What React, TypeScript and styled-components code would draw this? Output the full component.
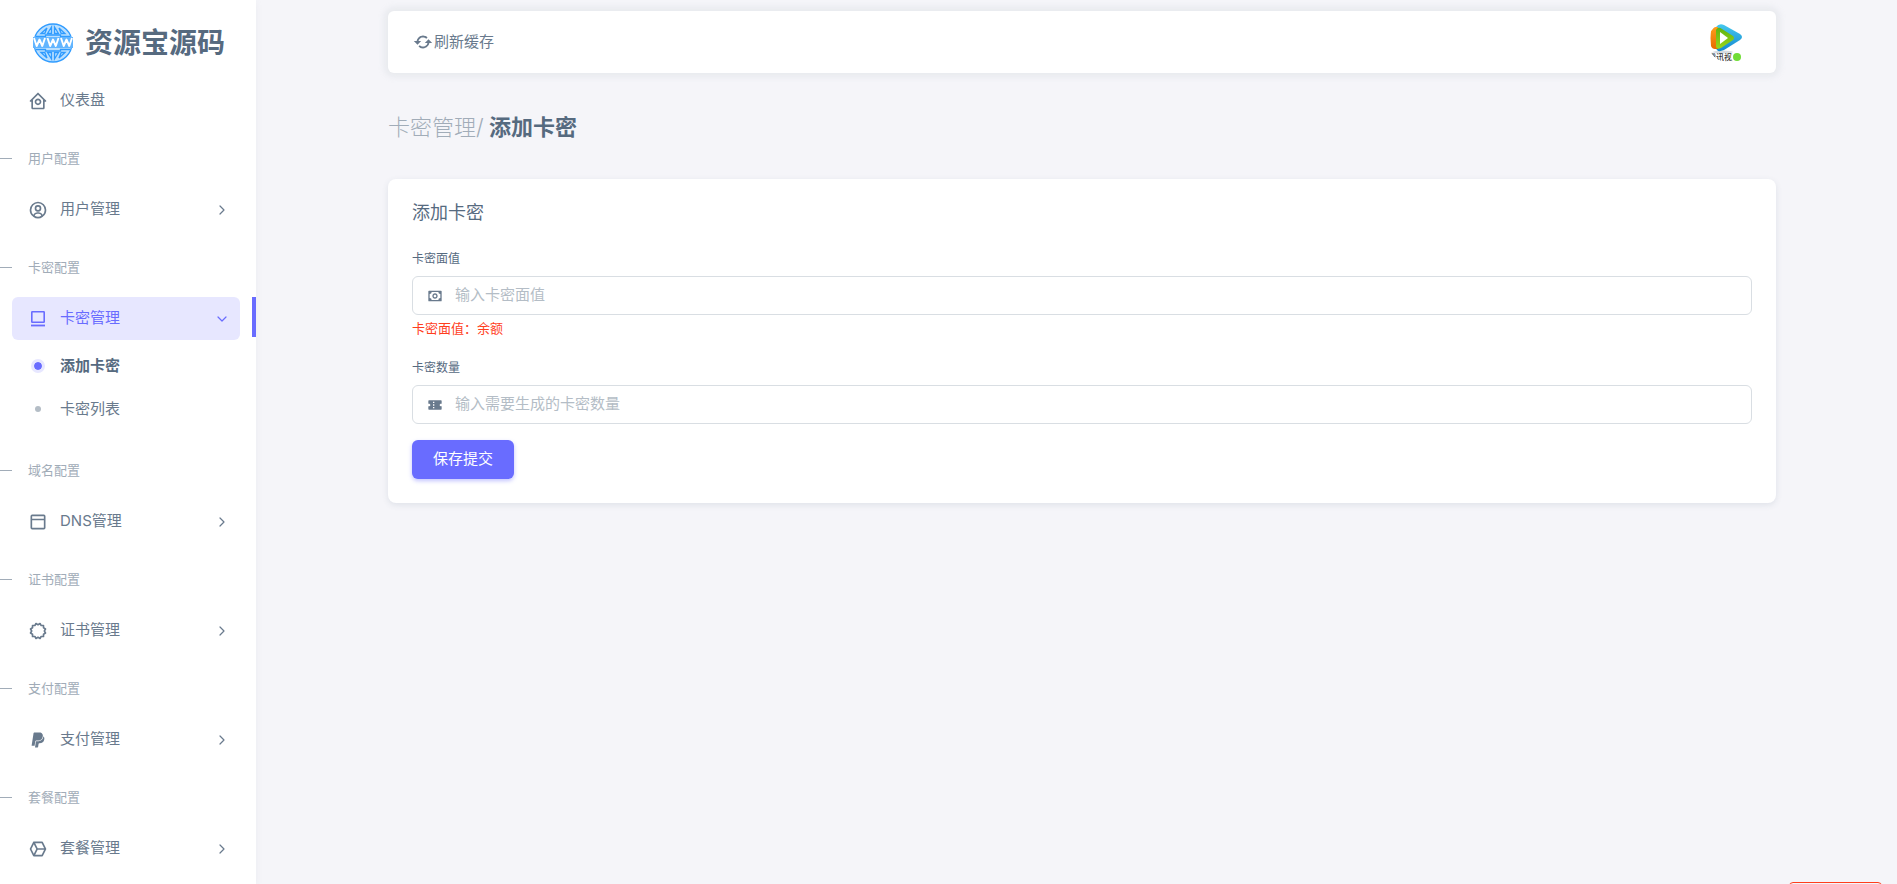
import React from 'react';
import styled, { createGlobalStyle, css } from 'styled-components';
import type { IconType } from 'react-icons';
import { ChevronDown, ChevronRight } from 'lucide-react';
import {
  BiCertification,
  BiCubeAlt,
  BiDockTop,
  BiHomeCircle,
  BiLogoPaypal,
  BiMoney,
  BiRefresh,
  BiSolidCoupon,
  BiUserCircle,
} from 'react-icons/bi';

const color = {
  primary: '#696cff',
  primarySoft: '#e7e7ff',
  body: '#697a8d',
  heading: '#566a7f',
  muted: '#a1acb8',
  placeholder: '#b4bdc6',
  border: '#d9dee3',
  page: '#f5f5f9',
  danger: '#ff3e1d',
  success: '#71dd37',
};

const GlobalStyle = createGlobalStyle`
  *, *::before, *::after { box-sizing: border-box; }
  body {
    margin: 0;
    background: ${color.page};
    color: ${color.body};
    font-family: Inter, "Noto Sans CJK SC", sans-serif;
    font-size: 15px;
    line-height: 23px;
  }
  a { color: inherit; text-decoration: none; }
  h1, h2, p, ul { margin: 0; padding: 0; }
  ul { list-style: none; }
  button, input { font: inherit; }
`;

const Layout = styled.div`
  display: flex;
  height: 100vh;
  overflow: hidden;
`;

const Sidebar = styled.aside`
  flex: none;
  width: 256px;
  overflow: hidden;
  background: #fff;
  box-shadow: 0 2px 6px rgba(161, 172, 184, 0.12);
`;

const Brand = styled.a`
  display: flex;
  align-items: center;
  gap: 12px;
  height: 79px;
  padding: 6px 20px 0 33px;
`;

const BrandName = styled.span`
  color: ${color.heading};
  font-size: 28px;
  font-weight: 700;
  line-height: 40px;
  white-space: nowrap;
`;

const SectionTitle = styled.li`
  display: flex;
  align-items: center;
  gap: 16px;
  height: 66px;
  padding-top: 6px;
  color: ${color.muted};
  font-size: 13px;

  &::before {
    content: '';
    width: 12px;
    height: 1px;
    background: ${color.muted};
  }
`;

const MenuItem = styled.li<{ $active?: boolean }>`
  padding-left: 12px;
  ${(p) =>
    p.$active &&
    css`
      background: linear-gradient(${color.primary}, ${color.primary}) no-repeat right top / 4px 40px;
    `}
`;

const MenuLink = styled.a<{ $active?: boolean }>`
  display: flex;
  align-items: center;
  width: 228px;
  height: 43px;
  padding: 0 10px 0 16px;
  border-radius: 6px;
  background: ${(p) => (p.$active ? color.primarySoft : 'transparent')};
  color: ${(p) => (p.$active ? color.primary : color.body)};

  > svg:first-child {
    margin-right: 12px;
  }
`;

const MenuText = styled.span`
  flex: 1;
  padding-bottom: 2px;
`;

const SubMenu = styled.ul`
  padding: 4px 0;
`;

const SubLink = styled.a<{ $active?: boolean }>`
  display: flex;
  align-items: center;
  gap: 15px;
  height: 43px;
  padding-left: 19px;
  color: ${(p) => (p.$active ? color.heading : color.body)};
  font-weight: ${(p) => (p.$active ? 600 : 400)};
`;

const Dot = styled.span<{ $active?: boolean }>`
  width: 14px;
  height: 14px;
  border: ${(p) => (p.$active ? `3px solid ${color.primarySoft}` : '4px solid transparent')};
  border-radius: 50%;
  background: ${(p) => (p.$active ? color.primary : color.placeholder)} padding-box;
`;

const Main = styled.main`
  flex: 1;
  min-width: 0;
  padding: 11px 24px 0 35px;
`;

const Container = styled.div`
  max-width: 1388px;
  margin: 0 auto;
`;

const Navbar = styled.header`
  display: flex;
  align-items: center;
  justify-content: space-between;
  height: 62px;
  padding: 0 28px 0 24px;
  border-radius: 6px;
  background: #fff;
  box-shadow: 0 0 6px 4px rgba(161, 172, 184, 0.15);
`;

const RefreshButton = styled.button`
  display: flex;
  align-items: center;
  padding: 0;
  border: 0;
  background: none;
  color: ${color.body};
  cursor: pointer;
`;

const RefreshText = styled.span`
  padding-bottom: 2px;
`;

const AvatarLink = styled.a`
  position: relative;
  display: block;
  width: 40px;
  height: 40px;
`;

const OnlineBadge = styled.span`
  position: absolute;
  right: 7px;
  bottom: 1px;
  width: 8px;
  height: 8px;
  border-radius: 50%;
  background: ${color.success};
  box-shadow: 0 0 0 2px #fff;
`;

const PageTitle = styled.h1`
  margin: 37px 0 35px;
  color: ${color.heading};
  font-size: 22px;
  font-weight: 700;
  line-height: 34px;
`;

const Crumb = styled.span`
  color: ${color.muted};
  font-weight: 300;
`;

const Card = styled.section`
  padding: 21px 24px 24px;
  border-radius: 8px;
  background: #fff;
  box-shadow: 0 2px 6px rgba(67, 89, 113, 0.12);
`;

const CardTitle = styled.h2`
  margin-bottom: 24px;
  color: ${color.heading};
  font-size: 18px;
  font-weight: 400;
  line-height: 26px;
`;

const Field = styled.div`
  margin-bottom: 16px;
`;

const Label = styled.label`
  display: block;
  margin-bottom: 8px;
  color: ${color.heading};
  font-size: 12px;
  line-height: 18px;
`;

const InputGroup = styled.div`
  display: flex;
  align-items: center;
  height: 39px;
  padding-left: 14px;
  border: 1px solid ${color.border};
  border-radius: 6px;

  > svg {
    flex: none;
  }
`;

const TextInput = styled.input`
  flex: 1;
  min-width: 0;
  height: 35px;
  padding: 0 14px 2px 12px;
  border: 0;
  outline: 0;
  background: transparent;
  color: ${color.body};

  &::placeholder {
    color: ${color.placeholder};
    opacity: 1;
  }
`;

const Hint = styled.p`
  padding: 3px 0 5px;
  color: ${color.danger};
  font-size: 13px;
  line-height: 20px;
`;

const SubmitButton = styled.button`
  display: block;
  height: 39px;
  padding: 0 21px 2px;
  border: 0;
  border-radius: 6px;
  background: ${color.primary};
  box-shadow: 0 2px 4px rgba(105, 108, 255, 0.4);
  color: #fff;
  cursor: pointer;
`;

const FloatingButton = styled.button`
  position: fixed;
  right: 15px;
  bottom: -36px;
  width: 93px;
  height: 38px;
  border: 1px solid ${color.danger};
  border-radius: 4px;
  background: transparent;
`;

function GlobeLogo() {
  return (
    <svg width="40" height="40" viewBox="0 0 40 40" aria-hidden="true">
      <circle cx="20" cy="20" r="19" fill="#b9dfff" stroke="#2f9bff" strokeWidth="1.3" />
      <g fill="none" stroke="#2f9bff" strokeWidth="1.3">
        <path d="M8 10.500 14 5 11.800 10.500Z M14.500 10.500 18.500 4V10.500Z M21.500 4 25.500 10.500H21.500Z M26 5 32 10.500H28.200Z" />
        <path d="M8 29.500 14 35 11.800 29.500Z M14.500 29.500 18.500 36V29.500Z M21.500 36 25.500 29.500H21.500Z M26 35 32 29.500H28.200Z" />
        <path d="M3 13.500H12.500V12H27.500V13.500H37M3 26.500H12.500V28H27.500V26.500H37" />
      </g>
      <rect x="0" y="14" width="40" height="11" fill="#62b5ff" />
      <g fill="none" stroke="#fff" strokeWidth="1.900" strokeLinejoin="round">
        <path d="M1 15 3.700 23 6.500 16.500 9.300 23 12 15" />
        <path d="M14.500 15 17.200 23 20 16.500 22.800 23 25.500 15" />
        <path d="M28 15 30.700 23 33.500 16.500 36.300 23 39 15" />
      </g>
    </svg>
  );
}

function DeviceIcon({ size = 20 }: { size?: number | string }) {
  return (
    <svg width={size} height={size} viewBox="0 0 20 20" aria-hidden="true">
      <rect x="3.800" y="2.800" width="12.400" height="10.400" rx="0.500" fill="none" stroke="currentColor" strokeWidth="1.600" />
      <path d="M3 16.500H17" stroke="currentColor" strokeWidth="1.800" />
    </svg>
  );
}

function Avatar() {
  return (
    <svg width="40" height="40" viewBox="0 0 40 40" aria-hidden="true">
      <defs>
        <clipPath id="avatar-clip">
          <circle cx="20" cy="20" r="20" />
        </clipPath>
        <linearGradient id="avatar-blue" x1="0" y1="0" x2="0" y2="1">
          <stop offset="0" stopColor="#45c8ee" />
          <stop offset="1" stopColor="#1588cf" />
        </linearGradient>
        <linearGradient id="avatar-orange" x1="0" y1="0" x2="0" y2="1">
          <stop offset="0" stopColor="#ff9d1c" />
          <stop offset="1" stopColor="#e66a00" />
        </linearGradient>
        <linearGradient id="avatar-green" x1="0" y1="0" x2="0" y2="1">
          <stop offset="0" stopColor="#5fb312" />
          <stop offset="1" stopColor="#9bd61a" />
        </linearGradient>
      </defs>
      <g clipPath="url(#avatar-clip)">
        <rect width="40" height="40" fill="#fff" />
        <ellipse cx="15" cy="30" rx="10" ry="1.500" fill="#d5dbe0" />
        <path d="M8 5Q11 1 16 3L32 12Q36 15 32 18L16 28Q9 31 8 26Z" fill="url(#avatar-blue)" />
        <path d="M3 8Q4 5 8 5H10V27H7Q4 27 3 24Q2 16 3 8Z" fill="url(#avatar-orange)" />
        <path d="M8 8Q10 4 14 7L25 14Q27 16 25 18L13 26Q9 28 8 25Z" fill="url(#avatar-green)" />
        <path d="M12 10 20 16 12 22Z" fill="#fff" />
        <text x="0" y="38" fontSize="8" fontWeight="500" fontFamily="'Noto Sans CJK SC', sans-serif" fill="#333">
          腾讯视频
        </text>
      </g>
    </svg>
  );
}

type IconComponent = IconType | typeof DeviceIcon;

function NavLink({ icon: Icon, text, open, plain }: { icon: IconComponent; text: string; open?: boolean; plain?: boolean }) {
  const Chevron = open ? ChevronDown : ChevronRight;
  return (
    <MenuLink href="#" $active={open}>
      <Icon size={20} />
      <MenuText>{text}</MenuText>
      {!plain && <Chevron size={16} strokeWidth={1.8} />}
    </MenuLink>
  );
}

interface Section {
  title: string;
  text: string;
  icon: IconComponent;
  children?: { text: string; active?: boolean }[];
}

const sections: Section[] = [
  { title: '用户配置', text: '用户管理', icon: BiUserCircle },
  {
    title: '卡密配置',
    text: '卡密管理',
    icon: DeviceIcon,
    children: [{ text: '添加卡密', active: true }, { text: '卡密列表' }],
  },
  { title: '域名配置', text: 'DNS管理', icon: BiDockTop },
  { title: '证书配置', text: '证书管理', icon: BiCertification },
  { title: '支付配置', text: '支付管理', icon: BiLogoPaypal },
  { title: '套餐配置', text: '套餐管理', icon: BiCubeAlt },
];

export default function App() {
  return (
    <>
      <GlobalStyle />
      <Layout>
        <Sidebar>
          <Brand href="#">
            <GlobeLogo />
            <BrandName>资源宝源码</BrandName>
          </Brand>
          <nav>
            <ul>
              <MenuItem>
                <NavLink icon={BiHomeCircle} text="仪表盘" plain />
              </MenuItem>
              {sections.map((s) => (
                <React.Fragment key={s.title}>
                  <SectionTitle>{s.title}</SectionTitle>
                  <MenuItem $active={!!s.children}>
                    <NavLink icon={s.icon} text={s.text} open={!!s.children} />
                    {s.children && (
                      <SubMenu>
                        {s.children.map((c) => (
                          <li key={c.text}>
                            <SubLink href="#" $active={c.active}>
                              <Dot $active={c.active} />
                              {c.text}
                            </SubLink>
                          </li>
                        ))}
                      </SubMenu>
                    )}
                  </MenuItem>
                </React.Fragment>
              ))}
            </ul>
          </nav>
        </Sidebar>
        <Main>
          <Container>
            <Navbar>
              <RefreshButton type="button">
                <BiRefresh size={22} />
                <RefreshText>刷新缓存</RefreshText>
              </RefreshButton>
              <AvatarLink href="#">
                <Avatar />
                <OnlineBadge />
              </AvatarLink>
            </Navbar>
            <PageTitle>
              <Crumb>卡密管理/</Crumb> 添加卡密
            </PageTitle>
            <Card>
              <CardTitle>添加卡密</CardTitle>
              <form>
                <Field>
                  <Label htmlFor="card-value">卡密面值</Label>
                  <InputGroup>
                    <BiMoney size={16} />
                    <TextInput id="card-value" type="text" placeholder="输入卡密面值" />
                  </InputGroup>
                  <Hint>卡密面值：余额</Hint>
                </Field>
                <Field>
                  <Label htmlFor="card-count">卡密数量</Label>
                  <InputGroup>
                    <BiSolidCoupon size={16} />
                    <TextInput id="card-count" type="text" placeholder="输入需要生成的卡密数量" />
                  </InputGroup>
                </Field>
                <SubmitButton type="button">保存提交</SubmitButton>
              </form>
            </Card>
          </Container>
        </Main>
      </Layout>
      <FloatingButton type="button" />
    </>
  );
}
